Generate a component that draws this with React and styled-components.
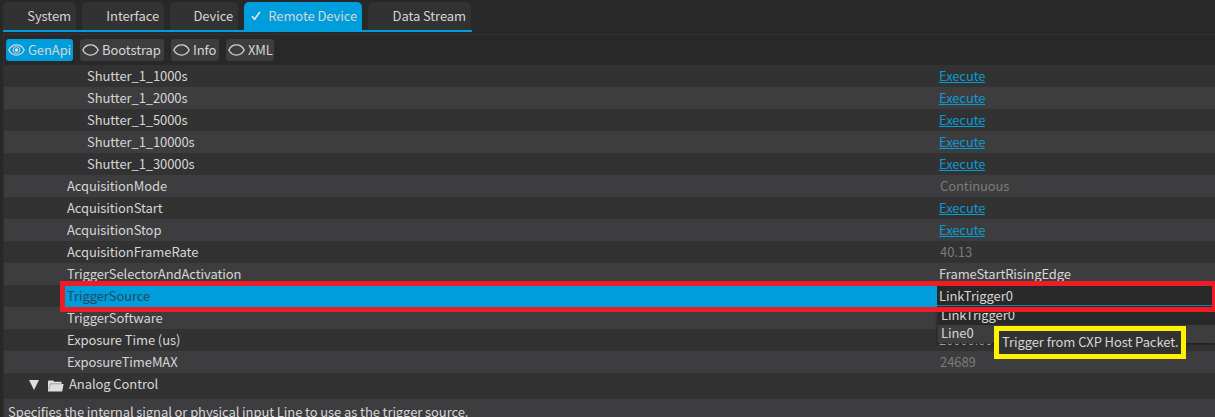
import React from "react";
import styled, { createGlobalStyle } from "styled-components";

const GlobalStyle = createGlobalStyle`
  * { box-sizing: border-box; }
  body {
    margin: 0;
    background: #282828;
    color: #d6d6d6;
    font: 13px "Noto Sans CJK SC", "Noto Sans", sans-serif;
    letter-spacing: -0.09px;
    overflow: hidden;
  }
`;

const Window = styled.div`
  position: relative;
  width: 1215px;
  height: 417px;
  overflow: hidden;
  display: flex;
  flex-direction: column;
  background: #282828;
  white-space: nowrap;
`;

const TabBar = styled.div`
  display: flex;
  gap: 6px;
  width: 469px;
  height: 30px;
  margin: 2px 0 0 3px;
  border-bottom: 2px solid #009ddc;
  flex: none;
`;

const Tab = styled.div`
  display: flex;
  align-items: center;
  justify-content: flex-end;
  gap: 7px;
  width: ${(p) => p.$width}px;
  height: 28px;
  padding-right: 5px;
  line-height: 28px;
  border-radius: 5px 5px 0 0;
  background: ${(p) => (p.$active ? "#009ddc" : "#323232")};
`;

const Panel = styled.div`
  flex: 1;
  margin: 2px 0 0 3px;
  border-top: 1px solid #333;
  border-left: 1px solid #303030;
`;

const ModeBar = styled.div`
  display: flex;
  gap: 7px;
  height: 30px;
  padding: 4px 0 4px 2px;
`;

const ModeButton = styled.div`
  display: flex;
  align-items: center;
  gap: 3px;
  width: ${(p) => p.$width}px;
  height: 22px;
  padding-left: 2px;
  line-height: 22px;
  border-radius: 3px;
  background: ${(p) => (p.$active ? "#009ddc" : "#3d3d3f")};
`;

const Row = styled.div`
  display: flex;
  height: 22px;
  line-height: 22px;
  background: #323232;
  &:nth-child(even) { background: #3d3d3f; }
`;

const Name = styled.div`
  width: 933px;
  padding-left: ${(p) => (p.$nested ? 83 : 63)}px;
`;

const Value = styled.div`
  padding-left: ${(p) => (p.$muted ? 3 : 2)}px;
  color: ${(p) => (p.$muted ? "#7b7b7b" : "#d6d6d6")};
`;

const Command = styled.span`
  display: inline-block;
  height: 18px;
  border-bottom: 1px solid #0999d5;
  color: #0999d5;
`;

const Category = styled.div`
  display: flex;
  align-items: center;
  height: 26px;
  padding-left: 25px;
  line-height: 22px;
  background: #323232;
  svg:first-child { margin: 0 9px 2px 0; }
  span { height: 26px; margin-left: 5px; }
`;

const Description = styled.div`
  height: 18px;
  padding-left: 4px;
  line-height: 26px;
  background: #3d3d3f;
`;

const Popup = styled.div`
  position: absolute;
  left: 937px;
  top: 307px;
  width: 278px;
  height: 36px;
  border-left: 1px solid #303030;
  background: #282828;
  box-shadow: 0 1px 2px #1c1c1c;
`;

const Option = styled.div`
  height: 18px;
  line-height: 16px;
  padding-left: 3px;
  background: ${(p) => (p.$hover ? "#3d3d3f" : "#282828")};
`;

const Selection = styled.div`
  position: absolute;
  left: 60px;
  top: 281px;
  display: flex;
  width: 1155px;
  height: 31px;
  border: 5px solid #ee1c25;
  border-right-width: 3px;
  line-height: 20px;
  background: #009ddc;
  color: #24495a;
`;

const SelectedName = styled.div`
  width: 872px;
  padding-left: 2px;
`;

const Editor = styled.div`
  flex: 1;
  height: 21px;
  padding-left: 2px;
  color: #d6d6d6;
  background: linear-gradient(#1780a8, #1780a8) 0 19px / 100% 1px no-repeat #282828;
`;

const Tooltip = styled.div`
  position: absolute;
  left: 994px;
  top: 326px;
  width: 192px;
  height: 33px;
  padding-left: 3px;
  border: 5px solid #fff200;
  line-height: 22px;
  background: #323232;
`;

const Eye = ({ open }) => (
  <svg width="17" height="14" viewBox="0 0 17 14" fill="none" stroke="#d0d4d6">
    <path d="M.8 7C4.2.2 12.8.2 16.2 7C12.8 13.8 4.2 13.8.8 7Z" strokeWidth="1.3" />
    {open && <circle cx="8.5" cy="7" r="3.4" />}
    {open && <circle cx="8.5" cy="7" r="1.7" fill="#e4e8ea" stroke="none" />}
  </svg>
);

const Check = () => (
  <svg width="10" height="10" viewBox="0 0 10 10" fill="none" stroke="#e6edf0" strokeWidth="1.6">
    <path d="M1 5.2L3.6 8.2L8.8 1" />
  </svg>
);

const Arrow = () => (
  <svg width="10" height="10" viewBox="0 0 10 10"><path d="M0 0H10L5 10Z" fill="#dedede" /></svg>
);

const Folder = () => (
  <svg width="16" height="12" viewBox="0 0 16 12">
    <path d="M0 11.5V1.5Q0 .5 1 .5H5L6.3 1.8H13.5V4H15.6L14.2 11.5Z" fill="#dedede" />
    <path d="M1 9.5L2.4 3.8H13.5" fill="none" stroke="#8a8a8a" strokeWidth=".7" />
  </svg>
);

const tabs = [["System", 73], ["Interface", 82], ["Device", 68], ["Remote Device", 118, true], ["Data Stream", 103]];
const modes = [["GenApi", 67, true], ["Bootstrap", 84], ["Info", 48], ["XML", 48]];
const rows = [
  ...["1000s", "2000s", "5000s", "10000s", "30000s"].map((s) => ({ name: "Shutter_1_" + s, nested: true, command: true })),
  { name: "AcquisitionMode", value: "Continuous", muted: true },
  { name: "AcquisitionStart", command: true },
  { name: "AcquisitionStop", command: true },
  { name: "AcquisitionFrameRate", value: "40.13", muted: true },
  { name: "TriggerSelectorAndActivation", value: "FrameStartRisingEdge" },
  { name: "" },
  { name: "TriggerSoftware" },
  { name: "Exposure Time (us)", value: "20000.00" },
  { name: "ExposureTimeMAX", value: "24689", muted: true },
];

export default function App() {
  return (
    <Window>
      <GlobalStyle />
      <TabBar>
        {tabs.map(([label, width, active]) => (
          <Tab key={label} $width={width} $active={active}>{active && <Check />}{label}</Tab>
        ))}
      </TabBar>
      <Panel>
        <ModeBar>
          {modes.map(([label, width, active]) => (
            <ModeButton key={label} $width={width} $active={active}><Eye open={active} />{label}</ModeButton>
          ))}
        </ModeBar>
        <div>
          {rows.map((r, i) => (
            <Row key={i}>
              <Name $nested={r.nested}>{r.name}</Name>
              <Value $muted={r.muted}>{r.command ? <Command>Execute</Command> : r.value}</Value>
            </Row>
          ))}
        </div>
        <Category><Arrow /><Folder /><span>Analog Control</span></Category>
        <Description>Specifies the internal signal or physical input Line to use as the trigger source.</Description>
      </Panel>
      <Popup>
        <Option>LinkTrigger0</Option>
        <Option $hover>Line0</Option>
      </Popup>
      <Selection>
        <SelectedName>TriggerSource</SelectedName>
        <Editor>LinkTrigger0</Editor>
      </Selection>
      <Tooltip>Trigger from CXP Host Packet.</Tooltip>
    </Window>
  );
}
